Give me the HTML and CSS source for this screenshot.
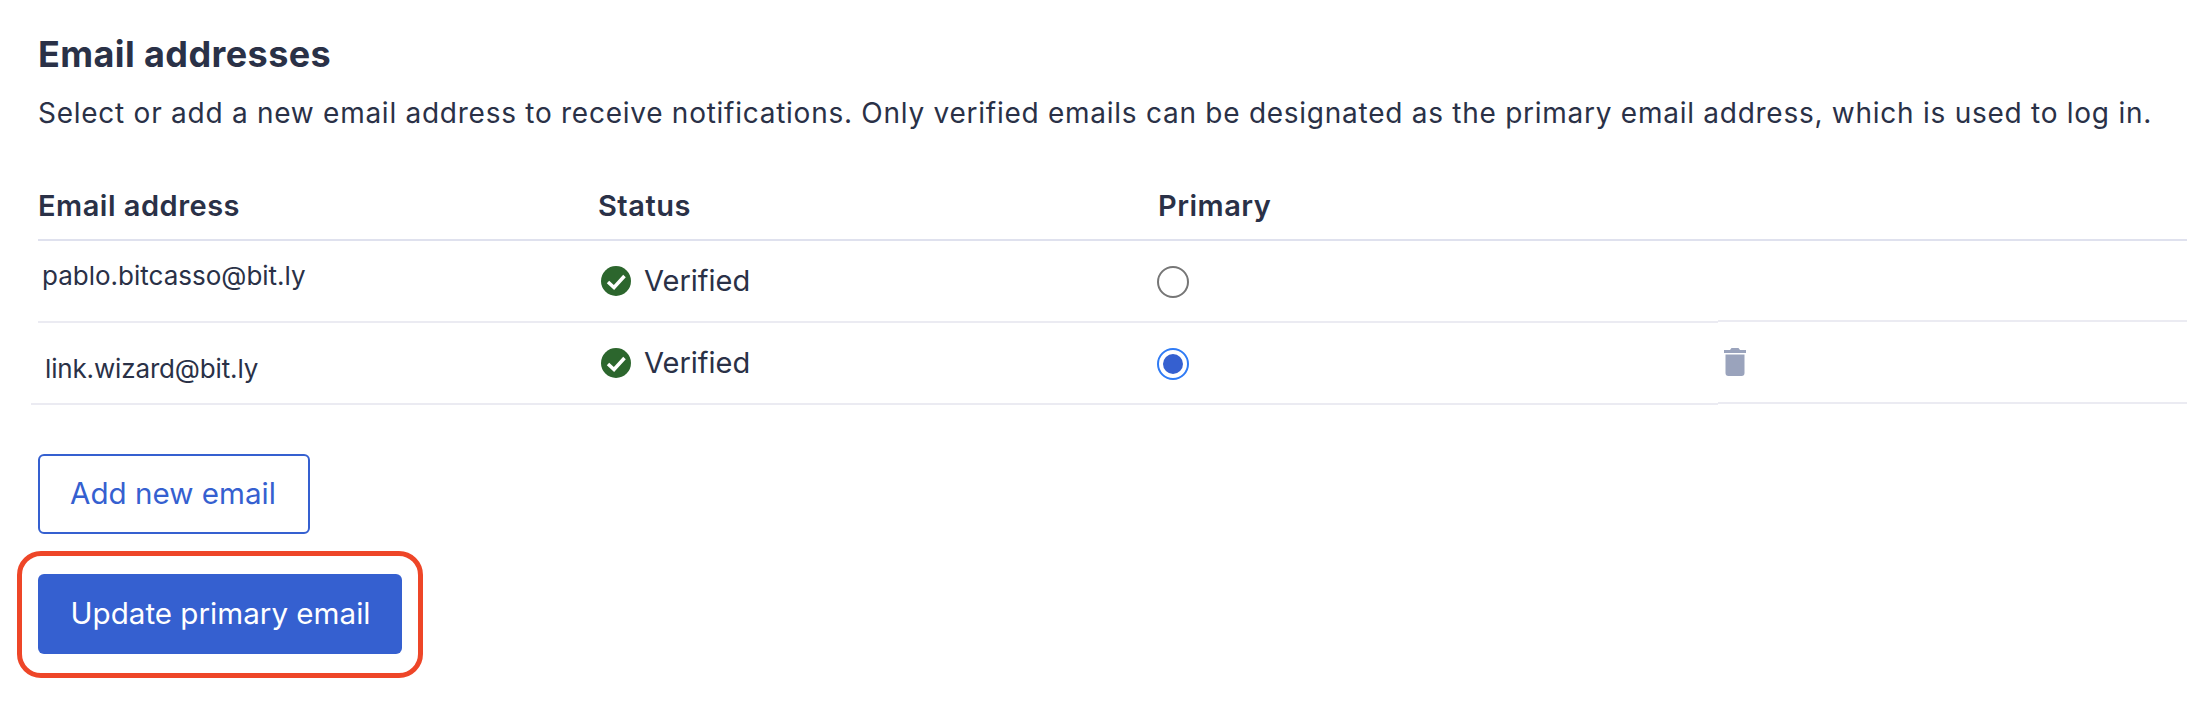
FILE: index.html
```html
<!DOCTYPE html>
<html lang="en">
<head>
    <meta charset="UTF-8">
    <title>Email addresses</title>
    <link rel="stylesheet" href="styles.css">
</head>
<body>
    <h1>Email addresses</h1>
    <p class="intro">Select or add a new email address to receive notifications. Only verified emails can be designated as the primary email address, which is used to log in.</p>

    <div class="email-table">
        <div class="cell head">Email address</div>
        <div class="cell head">Status</div>
        <div class="cell head">Primary</div>
        <div class="cell head"></div>

        <div class="cell"><span class="email first-email">pablo.bitcasso@bit.ly</span></div>
        <div class="cell"><span class="status">
            <svg class="check" viewBox="0 0 30 30"><circle cx="15" cy="15" r="15" fill="#2c662d"/><path d="M7 16l6 5.500L23.500 10" fill="none" stroke="#fff" stroke-width="3.500"/></svg>
            Verified</span></div>
        <div class="cell"><span class="radio"></span></div>
        <div class="cell action-cell"></div>

        <div class="cell email-cell"><span class="email second-email">link.wizard@bit.ly</span></div>
        <div class="cell"><span class="status">
            <svg class="check" viewBox="0 0 30 30"><circle cx="15" cy="15" r="15" fill="#2c662d"/><path d="M7 16l6 5.500L23.500 10" fill="none" stroke="#fff" stroke-width="3.500"/></svg>
            Verified</span></div>
        <div class="cell"><span class="radio checked"></span></div>
        <div class="cell action-cell">
            <svg class="trash" viewBox="0 0 22 28"><path fill="#9aa3bc" d="M7.500 0h7l1.500 2H22v3H0V2h6zM1.500 6.500h19V25a3 3 0 0 1-3 3h-13a3 3 0 0 1-3-3z"/></svg>
        </div>
    </div>

    <button class="btn btn-outline">Add new email</button>
    <div class="highlight">
        <button class="btn btn-primary">Update primary email</button>
    </div>
</body>
</html>
```

FILE: styles.css
```css
body {
    font-family: Inter, "Open Sans", sans-serif;
    color: #2a3147;
    background-color: white;
    margin: 0;
    padding: 32px 0 0 38px;
}

h1 {
    font-size: 36px;
    line-height: 44px;
    font-weight: 700;
    letter-spacing: 0.4px;
    margin: 0 0 17px;
}

.intro {
    font-size: 28px;
    line-height: 40px;
    letter-spacing: 0.74px;
    margin: 0 0 48px;
}

.email-table {
    display: grid;
    grid-template-columns: 560px 560px 560px 1fr;
    margin-bottom: 49px;
}

.cell {
    display: flex;
    align-items: center;
    border-bottom: 2px solid #ebebf2;
    height: 80px;
}

.head {
    font-size: 29px;
    font-weight: 600;
    letter-spacing: 0.5px;
    height: 60px;
    padding-bottom: 10px;
    box-sizing: border-box;
    border-bottom-color: #dfe1ee;
}

.status {
    display: flex;
    align-items: center;
    font-size: 29px;
    gap: 13px;
    padding-left: 3px;
    margin-top: -1px;
}

.check {
    width: 30px;
    height: 30px;
}

.email {
    font-size: 26px;
}

.first-email {
    padding-left: 4px;
    margin-top: -12px;
}

.second-email {
    padding-left: 14px;
    letter-spacing: -0.15px;
    margin-top: 10px;
}

.email-cell {
    margin-left: -7px;
}

.action-cell {
    margin-top: -1px;
}

.radio {
    width: 32px;
    height: 32px;
    box-sizing: border-box;
    border: 2px solid #767676;
    border-radius: 50%;
    margin: 2px 0 0 -1px;
}

.radio.checked {
    border-color: #2f7bf5;
    background-color: #3560d0;
    background-clip: content-box;
    padding: 4px;
}

.trash {
    width: 22px;
    height: 28px;
    margin-left: 6px;
}

.btn {
    display: block;
    font-family: inherit;
    font-size: 29.6px;
    height: 80px;
    border-radius: 6px;
    cursor: pointer;
}

.btn-outline {
    background-color: white;
    color: #3560d0;
    border: 2px solid #3560d0;
    padding: 0 32px 3px 30px;
}

.btn-primary {
    background-color: #3560d0;
    color: white;
    border: none;
    padding: 0 32px 3px 32.5px;
}

.highlight {
    display: inline-block;
    margin: 17px 0 0 -21px;
    padding: 18px 16px 19px;
    border: 5px solid #ee4628;
    border-radius: 24px;
}
```
